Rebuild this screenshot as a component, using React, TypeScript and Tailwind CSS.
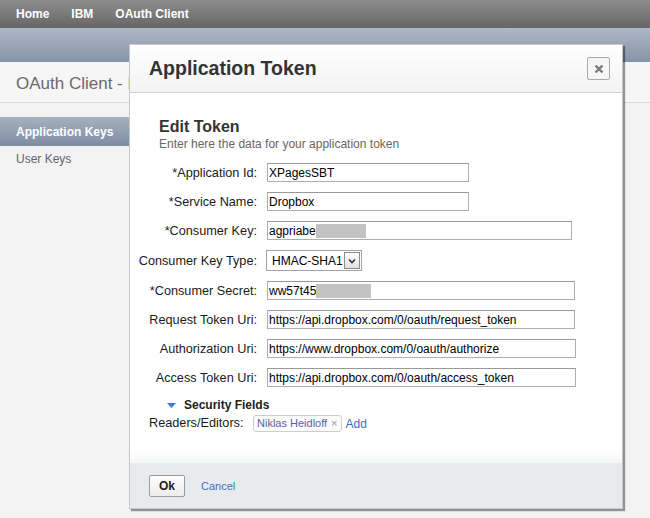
import React from "react";

const font = { fontFamily: '"Liberation Sans", Arial, sans-serif' };

interface FieldProps {
  label: string;
  value: string;
  width: number;
  hidden?: number;
}

const Label = ({ children }: { children: React.ReactNode }) => (
  <label className="w-[121px] shrink-0 whitespace-nowrap text-right text-[12.7px] leading-[14px] text-[#1a1a1a]">
    {children}
  </label>
);

const Field: React.FC<FieldProps> = ({ label, value, width, hidden }) => (
  <div className="flex items-center h-[19px]">
    <Label>{label}</Label>
    <div
      className="ml-[10px] h-[19px] flex items-center border border-[#aeaeae] border-t-[#999] bg-white pl-[1px] text-[12px] text-black overflow-hidden whitespace-nowrap"
      style={{ width }}
    >
      <span>{value}</span>
      {hidden ? <span className="h-[14px] bg-[#c3c3c3]" style={{ width: hidden }} /> : null}
    </div>
  </div>
);

const NavLink = ({ children }: { children: React.ReactNode }) => (
  <span className="mr-[22px] text-[12px] font-bold text-white">{children}</span>
);

export default function App() {
  return (
    <div style={font} className="relative w-[650px] h-[518px] overflow-hidden bg-[#f3f3f3]">
      {/* page behind the dialog */}
      <div className="h-[28px] flex items-center pl-[16px] bg-gradient-to-b from-[#8d8d8d] to-[#666666]">
        <NavLink>Home</NavLink>
        <NavLink>IBM</NavLink>
        <NavLink>OAuth Client</NavLink>
      </div>
      <div className="h-[34px] bg-gradient-to-b from-[#adb7c5] via-[#9aa6b7] to-[#8593a9]" />
      <div className="h-[41px] flex items-center pl-[16px] pt-[4px] bg-[#f6f6f6] border-b border-[#dcdcdc]">
        <div className="whitespace-nowrap text-[17px] text-[#6a6a6a]">OAuth Client - Manage Keys</div>
      </div>
      <div className="mt-[14px] w-[220px]">
        <div className="h-[29px] flex items-center pl-[16px] bg-gradient-to-b from-[#a6b1c0] to-[#7e8ca2] text-[12px] font-bold text-white">
          Application Keys
        </div>
        <div className="h-[26px] flex items-center pl-[16px] text-[12px] text-[#5c6475]">
          User Keys
        </div>
      </div>

      {/* dialog overlay */}
      <div className="absolute left-[129px] top-[44px] w-[494px] h-[465px] flex flex-col bg-white border border-[#c6c6c6] shadow-[2px_2px_1px_rgba(0,0,0,0.4)]">
        <div className="h-[48px] shrink-0 flex items-center justify-between pl-[19px] pr-[12px] bg-gradient-to-b from-white to-[#f3f3f3] border-b border-[#cfcfcf]">
          <h1 className="text-[19.5px] font-bold text-[#333] pt-[1px]">Application Token</h1>
          <button className="w-[23px] h-[23px] flex items-center justify-center border border-[#a9a9a9] rounded-[2px] bg-[#f7f7f7]">
            <svg width="10" height="10" viewBox="0 0 10 10">
              <path d="M1.5 1.5L8.5 8.5M8.5 1.5L1.5 8.5" stroke="#7a7a7a" strokeWidth="2.4" />
            </svg>
          </button>
        </div>

        <div className="flex-1 flex flex-col">
          <div className="pl-[29px] pt-[25px]">
            <h2 className="text-[16px] leading-[18px] font-bold text-[#333]">Edit Token</h2>
            <p className="text-[12px] leading-[14px] text-[#666] mt-[1px]">
              Enter here the data for your application token
            </p>
          </div>

          <div className="pl-[6px] mt-[12px] flex flex-col gap-[10px]">
            <Field label="*Application Id:" value="XPagesSBT" width={202} />
            <Field label="*Service Name:" value="Dropbox" width={202} />
            <Field label="*Consumer Key:" value="agpriabe" width={305} hidden={50} />
            <div className="flex items-center h-[21px]">
              <Label>Consumer Key Type:</Label>
              <div className="ml-[9px] w-[96px] h-[21px] flex items-center justify-between border border-[#a3a3a3] bg-white pl-[5px] pr-[1px] text-[12px] text-black">
                <span>HMAC-SHA1</span>
                <span className="w-[16px] h-[17px] flex items-center justify-center border border-[#8d8d8d] bg-gradient-to-b from-white to-[#e2e2e2]">
                  <svg width="8" height="6" viewBox="0 0 8 6">
                    <path d="M1 1.5L4 4.5L7 1.5" stroke="#333" strokeWidth="1.6" fill="none" />
                  </svg>
                </span>
              </div>
            </div>
            <Field label="*Consumer Secret:" value="ww57t45" width={308} hidden={55} />
            <Field label="Request Token Uri:" value="https://api.dropbox.com/0/oauth/request_token" width={308} />
            <Field label="Authorization Uri:" value="https://www.dropbox.com/0/oauth/authorize" width={309} />
            <Field label="Access Token Uri:" value="https://api.dropbox.com/0/oauth/access_token" width={309} />
          </div>

          <div className="mt-[11px] pl-[37px] flex items-center h-[14px]">
            <svg width="9" height="5" viewBox="0 0 9 5">
              <path d="M0 0H9L4.5 5Z" fill="#3a78d6" />
            </svg>
            <span className="ml-[8px] text-[12px] font-bold text-[#222]">Security Fields</span>
          </div>

          <div className="mt-[3px] pl-[19px] flex items-center h-[17px]">
            <span className="w-[104px] text-[12.7px] text-[#1a1a1a]">Readers/Editors:</span>
            <span className="h-[17px] flex items-center px-[3px] border border-[#cdcdcd] rounded-[3px] bg-[#fbfbfb] text-[11px] text-[#5a62a6]">
              Niklas Heidloff
              <span className="ml-[4px] text-[#9a9a9a]">×</span>
            </span>
            <span className="ml-[4px] text-[12px] text-[#3d6fc6]">Add</span>
          </div>

          <div className="mt-auto h-[11px] bg-gradient-to-b from-white to-[#f4f5f5]" />
        </div>

        <div className="h-[45px] shrink-0 flex items-center pl-[19px] pt-[1px] bg-[#e7ebed]">
          <button className="w-[36px] h-[22px] border border-[#9c9c9c] rounded-[2px] bg-gradient-to-b from-white to-[#ececec] text-[12px] font-bold text-[#222]">
            Ok
          </button>
          <span className="ml-[16px] text-[11px] text-[#3f6fc0]">Cancel</span>
        </div>
      </div>
    </div>
  );
}
